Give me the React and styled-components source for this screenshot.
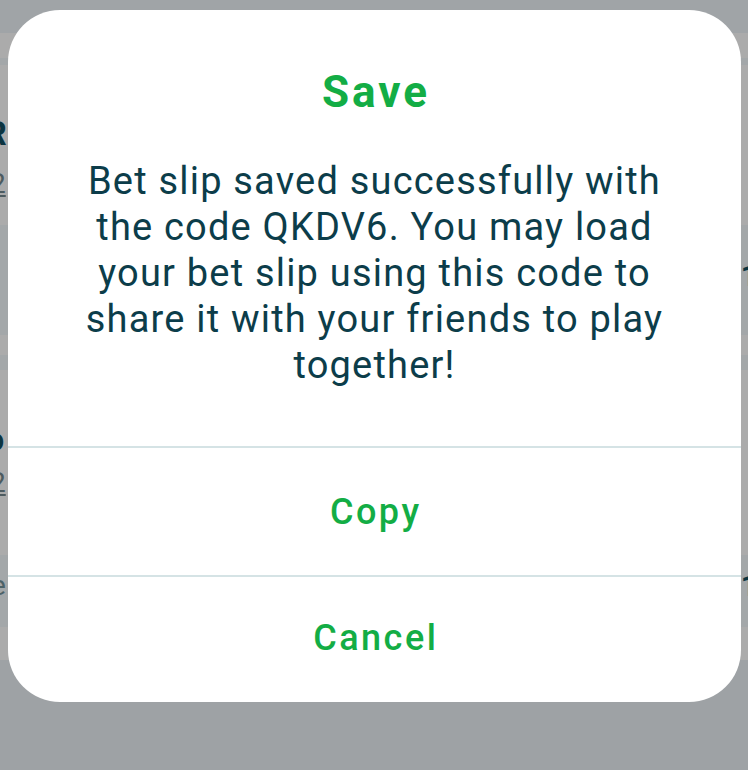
import styled, { createGlobalStyle } from "styled-components"

const Global = createGlobalStyle`
    html, body {
        margin: 0;
        padding: 0;
        background: #9ea2a5;
        font-family: Roboto, "Noto Sans", "Liberation Sans", sans-serif;
    }
    #root {
        width: 748px;
        height: 770px;
        overflow: hidden;
    }
`

const Tela = styled.div`
    position: relative;
    width: 748px;
    height: 770px;
    overflow: hidden;
    background: #9ea2a5;
`

const Fundo = styled.div`
    display: flex;
    flex-direction: column;
`

const Faixa = styled.div`
    height: ${(p) => p.$altura}px;
    background: ${(p) => (p.$escura ? "#a3a7a9" : "#ababab")};
    display: flex;
    flex-direction: column;
    justify-content: space-between;
    align-items: flex-start;
    padding: ${(p) => p.$pad || "0"};
    box-sizing: border-box;
`

const Topo = styled.div`
    height: 33px;
    background: #a0a4a7;
`

const Linha = styled.div`
    display: flex;
    justify-content: space-between;
    width: 100%;
    align-items: center;
`

const Nome = styled.span`
    font-weight: 700;
    font-size: 34px;
    color: #0b3440;
    margin-left: -15px;
    line-height: 1;
`

const Data = styled.span`
    font-size: 28px;
    color: #4d5b60;
    text-decoration: underline;
    margin-left: -10px;
    line-height: 1;
`

const Cinza = styled.span`
    font-size: 28px;
    color: #4d6268;
    margin-left: -9px;
    line-height: 1;
`

const Marca = styled.span`
    font-size: 30px;
    font-weight: 700;
    color: #0b3440;
    margin-right: -10px;
    line-height: 1;
`

const Sombra = styled.div`
    position: absolute;
    inset: 0;
    display: flex;
    justify-content: center;
    align-items: flex-start;
    padding-top: 10px;
`

const Dialogo = styled.div`
    width: 733px;
    height: 692px;
    margin-left: 1px;
    background: #ffffff;
    border-radius: 52px;
    display: flex;
    flex-direction: column;
    overflow: hidden;
`

const Conteudo = styled.div`
    flex: 1;
    display: flex;
    flex-direction: column;
    align-items: center;
    padding: 58px 62px 0;
    box-sizing: border-box;
`

const Titulo = styled.h2`
    margin: 0;
    font-size: 44px;
    font-weight: 700;
    letter-spacing: 3px;
    text-indent: 3px;
    color: #13ad45;
    line-height: 48px;
`

const Texto = styled.p`
    margin: 42px 0 0;
    font-size: 38px;
    letter-spacing: 1.2px;
    line-height: 46px;
    color: #0c3d4a;
    text-align: center;
`

const Botao = styled.button`
    border: 0;
    border-top: 2px solid #d5e3e5;
    background: transparent;
    height: ${(p) => p.$altura}px;
    width: 100%;
    font-family: Roboto, "Noto Sans", "Liberation Sans", sans-serif;
    font-size: 36px;
    font-weight: 500;
    letter-spacing: 2.5px;
    text-indent: 2.5px;
    color: #13ad45;
    padding: ${(p) => p.$pad || "0"};
`

const App = () => {
    return (
        <Tela>
            <Global />
            <Fundo>
                <Topo />
                <Faixa $altura={25} />
                <Faixa $altura={7} $escura />
                <Faixa $altura={160} $pad="51px 0 27px">
                    <Nome>R</Nome>
                    <Data>2</Data>
                </Faixa>
                <Faixa $altura={110} $escura $pad="36px 0 0">
                    <Linha>
                        <Cinza>-</Cinza>
                        <Marca>1</Marca>
                    </Linha>
                </Faixa>
                <Faixa $altura={20} />
                <Faixa $altura={15} $escura />
                <Faixa $altura={185} $pad="52px 0 58px">
                    <Nome>o</Nome>
                    <Data>2</Data>
                </Faixa>
                <Faixa $altura={72} $escura $pad="16px 0 0">
                    <Linha>
                        <Cinza>e</Cinza>
                        <Marca>1</Marca>
                    </Linha>
                </Faixa>
                <Faixa $altura={33} />
            </Fundo>
            <Sombra>
                <Dialogo>
                    <Conteudo>
                        <Titulo>Save</Titulo>
                        <Texto>
                            Bet slip saved successfully with the code QKDV6. You may load your bet slip using this code to share it with your friends to play together!
                        </Texto>
                    </Conteudo>
                    <Botao $altura={129}>Copy</Botao>
                    <Botao $altura={127} $pad="0 0 4px">Cancel</Botao>
                </Dialogo>
            </Sombra>
        </Tela>
    )
}

export default App
